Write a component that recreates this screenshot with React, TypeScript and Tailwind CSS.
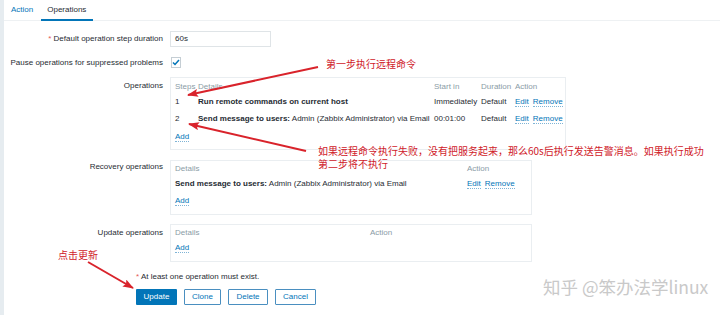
import React from "react";

const Link = ({ children }: { children: React.ReactNode }) => (
  <span className="text-[#0275b8] border-b border-dotted border-[#7fb4d6] leading-[9px]">{children}</span>
);

export default function App() {
  return (
    <div
      className="relative w-[720px] h-[315px] overflow-hidden bg-white flex text-[8px] text-[#1f2c33]"
      style={{ fontFamily: '"Liberation Sans", Arial, sans-serif' }}
    >
      <div className="w-[4px] shrink-0 bg-[#e6ecf0]" />
      <div className="flex-1 flex flex-col">
        {/* tabs */}
        <div className="h-[21px] border-b border-[#eef1f3] flex items-stretch">
          <div className="px-[7px] flex items-center text-[#0275b8]">Action</div>
          <div className="relative px-[7px] flex items-center">
            Operations
            <div className="absolute left-[1px] right-0 bottom-[-1px] h-[2px] bg-[#0275b8]" />
          </div>
        </div>

        {/* form */}
        <div className="flex flex-col mt-[10px]">
          {/* row 1 */}
          <div className="flex items-center h-[16px]">
            <div className="w-[159px] text-right">
              <span className="text-[#e45959]">* </span>Default operation step duration
            </div>
            <div className="ml-[7px] w-[101px] h-[16px] border border-[#dfe4e7] flex items-center pl-[4px]">60s</div>
          </div>

          {/* row 2 */}
          <div className="flex items-center h-[11px] mt-[10px]">
            <div className="w-[159px] text-right">Pause operations for suppressed problems</div>
            <div className="ml-[8px] w-[10px] h-[11px] border border-[#c5ced4] flex items-center justify-center">
              <svg width="8" height="7" viewBox="0 0 8 7">
                <path d="M1 3.5 L3 5.5 L7 1" stroke="#0275b8" strokeWidth="1.5" fill="none" />
              </svg>
            </div>
          </div>

          {/* operations */}
          <div className="flex items-start mt-[9px]">
            <div className="w-[159px] text-right pt-[4px] leading-[10px]">Operations</div>
            <div className="ml-[7px] w-[396px] border border-[#eaeef1] pl-[4px] pt-[2px] pb-[3px]">
              <div className="grid grid-cols-[23px_236px_47px_34px_1fr] justify-items-start h-[14px] items-center text-[#8a9ca6]">
                <div>Steps</div>
                <div>Details</div>
                <div>Start in</div>
                <div>Duration</div>
                <div>Action</div>
              </div>
              <div className="grid grid-cols-[23px_236px_47px_34px_1fr] justify-items-start h-[16px] items-center">
                <div>1</div>
                <div className="font-bold">Run remote commands on current host</div>
                <div>Immediately</div>
                <div>Default</div>
                <div className="flex gap-[4px]">
                  <Link>Edit</Link>
                  <Link>Remove</Link>
                </div>
              </div>
              <div className="grid grid-cols-[23px_236px_47px_34px_1fr] justify-items-start h-[18px] items-center">
                <div>2</div>
                <div>
                  <span className="font-bold">Send message to users:</span> Admin (Zabbix Administrator) via Email
                </div>
                <div>00:01:00</div>
                <div>Default</div>
                <div className="flex gap-[4px]">
                  <Link>Edit</Link>
                  <Link>Remove</Link>
                </div>
              </div>
              <div className="h-[18px] flex items-center">
                <Link>Add</Link>
              </div>
            </div>
          </div>

          {/* recovery */}
          <div className="flex items-start mt-[10px]">
            <div className="w-[159px] text-right pt-[2px] leading-[10px]">Recovery operations</div>
            <div className="ml-[7px] w-[362px] border border-[#eaeef1] pl-[4px] pt-[2px] pb-[5px]">
              <div className="grid grid-cols-[292px_1fr] justify-items-start h-[12px] items-center text-[#8a9ca6]">
                <div>Details</div>
                <div>Action</div>
              </div>
              <div className="grid grid-cols-[292px_1fr] justify-items-start h-[18px] items-center">
                <div>
                  <span className="font-bold">Send message to users:</span> Admin (Zabbix Administrator) via Email
                </div>
                <div className="flex gap-[4px]">
                  <Link>Edit</Link>
                  <Link>Remove</Link>
                </div>
              </div>
              <div className="h-[16px] flex items-center">
                <Link>Add</Link>
              </div>
            </div>
          </div>

          {/* update */}
          <div className="flex items-start mt-[9px]">
            <div className="w-[159px] text-right pt-[4px] leading-[10px]">Update operations</div>
            <div className="ml-[7px] w-[362px] border border-[#eaeef1] pl-[4px] pt-[2px] pb-[4px]">
              <div className="grid grid-cols-[195px_1fr] justify-items-start h-[12px] items-center text-[#8a9ca6]">
                <div>Details</div>
                <div>Action</div>
              </div>
              <div className="h-[18px] flex items-center">
                <Link>Add</Link>
              </div>
            </div>
          </div>

          {/* message */}
          <div className="ml-[132px] mt-[10px] h-[10px] leading-[10px]">
            <span className="text-[#e45959]">*</span> At least one operation must exist.
          </div>

          {/* buttons */}
          <div className="ml-[132px] mt-[7px] flex gap-[7px]">
            <div className="w-[41px] h-[16px] bg-[#0275b8] text-white flex items-center justify-center rounded-[1px]">Update</div>
            <div className="w-[37px] h-[16px] border border-[#4a8fc0] text-[#0275b8] flex items-center justify-center rounded-[1px]">Clone</div>
            <div className="w-[40px] h-[16px] border border-[#4a8fc0] text-[#0275b8] flex items-center justify-center rounded-[1px]">Delete</div>
            <div className="w-[41px] h-[16px] border border-[#4a8fc0] text-[#0275b8] flex items-center justify-center rounded-[1px]">Cancel</div>
          </div>
        </div>
      </div>

      {/* annotations */}
      <svg className="absolute inset-0 pointer-events-none" width="720" height="315">
        <defs>
          <marker id="ah" markerWidth="11" markerHeight="8" refX="10" refY="4" orient="auto" markerUnits="userSpaceOnUse">
            <path d="M0,0 L11,4 L0,8 L2,4 z" fill="#d9232b" />
          </marker>
        </defs>
        <line x1="318" y1="67" x2="188" y2="95" stroke="#d9232b" strokeWidth="2" markerEnd="url(#ah)" />
        <line x1="306" y1="151" x2="189" y2="124" stroke="#d9232b" strokeWidth="2" markerEnd="url(#ah)" />
        <line x1="88" y1="262" x2="133" y2="288" stroke="#d9232b" strokeWidth="2" markerEnd="url(#ah)" />
      </svg>

      <div
        className="absolute left-[326px] top-[57px] text-[10px] leading-[14px] text-[#d0212a]"
        style={{ fontFamily: '"Noto Sans CJK SC", sans-serif' }}
      >
        第一步执行远程命令
      </div>
      <div
        className="absolute left-[318px] top-[145px] text-[10px] leading-[12px] text-[#d0212a] whitespace-nowrap flex flex-col gap-[1px]"
        style={{ fontFamily: '"Noto Sans CJK SC", sans-serif' }}
      >
        <div className="h-[12px]">如果远程命令执行失败，没有把服务起来，那么60s后执行发送告警消息。如果执行成功</div>
        <div className="h-[12px]">第二步将不执行</div>
      </div>
      <div
        className="absolute left-[58px] top-[248px] text-[10px] leading-[14px] text-[#d0212a]"
        style={{ fontFamily: '"Noto Sans CJK SC", sans-serif' }}
      >
        点击更新
      </div>
      <div
        className="absolute left-[543px] top-[276px] text-[17.5px] leading-[22px] text-[#c9c9c9] whitespace-nowrap"
        style={{ fontFamily: '"Noto Sans CJK SC", sans-serif', textShadow: "0 0 1px #ffffff" }}
      >
        知乎 @笨办法学linux
      </div>
    </div>
  );
}
